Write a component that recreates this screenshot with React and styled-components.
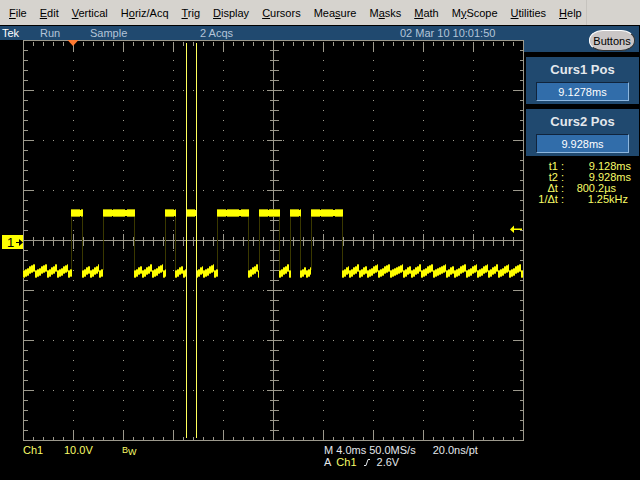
import React from "react"
import styled, { createGlobalStyle } from "styled-components"

const colors = {
  black: "#000",
  menu: "#d6d3ce",
  navy: "#20496f",
  field: "#316daa",
  grid: "#9c998c",
  trace: "#ffff00",
  dim: "#a8a600",
  edge: "#3a3800",
  cursor: "#ffff5a",
  yellow: "#f8fc68",
  light: "#e4e8ec",
  status: "#b4c4d8",
  orange: "#ff7a31",
}

const GlobalStyle = createGlobalStyle`
  * {
    box-sizing: border-box;
  }
  body {
    margin: 0;
    background: ${colors.black};
    color: ${colors.light};
    font: 11px/12px "Liberation Sans", Arial, sans-serif;
  }
  button, input {
    font: inherit;
  }
`

const Page = styled.div`
  display: flex;
  flex-direction: column;
  min-height: 100vh;
`

const MenuBar = styled.nav`
  display: flex;
  height: 26px;
  background: ${colors.menu};
  border-bottom: 1px solid ${colors.black};
`

const MenuList = styled.div`
  display: flex;
  align-items: center;
  gap: 13px;
  padding: 0 4px 0 9px;
  border-right: 1px solid #c6c3be;
`

const MenuItem = styled.button`
  padding: 0;
  border: 0;
  background: none;
  color: ${colors.black};
  line-height: 14px;
  white-space: pre;
`

const Body = styled.div`
  display: flex;
  flex: 1;
`

const Main = styled.main`
  flex: 1;
  min-width: 0;
`

const Status = styled.header`
  display: grid;
  grid-template-columns: 38px 50px 110px 200px 1fr;
  height: 14px;
  padding-left: 2px;
  background: ${colors.navy};
  color: ${colors.status};
  line-height: 14px;
  white-space: nowrap;
`

const Brand = styled.strong`
  color: #fff;
  font-weight: normal;
`

const Display = styled.svg`
  display: block;
  width: 100%;
`

const ChannelMark = styled.text`
  fill: ${colors.black};
  font-size: 13px;
`

const Readouts = styled.footer`
  display: grid;
  grid-template-columns: 301fr 200fr;
  padding: 3px 0 0 23px;
`

const Channel = styled.div`
  display: grid;
  grid-template-columns: 41px 58px 1fr;
  color: ${colors.yellow};
`

const Bandwidth = styled.span`
  font-size: 9px;
  sub {
    font-size: 9px;
    line-height: 1px;
    vertical-align: -2px;
  }
`

const Timebase = styled.div`
  display: flex;
  gap: 3px;
  white-space: nowrap;
`

const Resolution = styled.span`
  margin-left: 14px;
`

const Trigger = styled.div`
  display: flex;
  gap: 5px;
  em {
    color: ${colors.yellow};
    font-style: normal;
  }
`

const Side = styled.aside`
  display: flex;
  flex-direction: column;
  gap: 5px;
  width: 116px;
`

const SideTop = styled.div`
  display: flex;
  justify-content: flex-end;
  height: 26px;
  padding: 4px 4px 0 0;
  margin-right: 1px;
  background: ${colors.navy};
`

const ButtonsKey = styled.button`
  width: 46px;
  height: 21px;
  padding: 0;
  border: 1px solid #fff;
  border-right-color: #333;
  border-bottom-color: #333;
  border-radius: 14px / 10px;
  background: #cac6c6;
  color: ${colors.black};
`

const Panel = styled.label`
  display: flex;
  flex-direction: column;
  gap: 5px;
  height: 47px;
  margin: 0 1px 0 2px;
  padding: 6px 10px 0;
  background: ${colors.navy};
  font-size: 13px;
  font-weight: bold;
  line-height: 14px;
  text-align: center;
`

const PanelInput = styled.input`
  width: 100%;
  height: 19px;
  padding: 0;
  border: 1px solid #10243c;
  border-right-color: #8cb6de;
  border-bottom-color: #8cb6de;
  border-radius: 0;
  background: ${colors.field};
  color: #fff;
  font-size: 11px;
  font-weight: normal;
  text-align: center;
`

const Measurements = styled.table`
  margin: 0 9px 0 10px;
  border-collapse: collapse;
  color: ${colors.yellow};
  line-height: 11px;
  th {
    width: 30px;
    padding: 0;
    font-weight: normal;
    text-align: right;
    white-space: nowrap;
  }
`

const Value = styled.td`
  padding: 0 ${props => props.$inset || 0}px 0 0;
  text-align: right;
`

// text, index of the underlined letter
const menus = [
  ["File", 0],
  ["Edit", 0],
  ["Vertical", 0],
  ["Horiz/Acq", 1],
  ["Trig", 0],
  ["Display", 0],
  ["Cursors", 0],
  ["Measure", 3],
  ["Masks", 1],
  ["Math", 0],
  ["MyScope", 1],
  ["Utilities", 0],
  ["Help", 0],
]

const cursors = [
  { name: "Curs1 Pos", value: "9.1278ms" },
  { name: "Curs2 Pos", value: "9.928ms" },
]

const measurements = [
  { name: "t1 :", value: "9.128ms" },
  { name: "t2 :", value: "9.928ms" },
  { name: "Δt :", value: "800.2µs", inset: 15 },
  { name: "1/Δt :", value: "1.25kHz", inset: 3 },
]

// the graticule is 10 x 8 divisions of 50 units, with its corner at (23, 0)
const LEFT = 23
const RIGHT = 523
const HEIGHT = 400
const steps = n => Array.from({ length: n - 1 }, (_, i) => (i + 1) * 10)

const ticks = () => {
  let d = ""
  steps(50).forEach(i => {
    const x = LEFT + i
    const major = i % 50 === 0
    const edge = major ? 10 : 4
    const mid = major ? 7 : 4
    d += `M${x} 1v${edge}M${x} ${HEIGHT}v${-edge}M${x} ${200 - mid}v${mid * 2 + 1}`
  })
  steps(40).forEach(y => {
    const major = y % 50 === 0
    const edge = major ? 10 : 4
    const mid = major ? 7 : 4
    d += `M${LEFT} ${y}h${edge}M${RIGHT} ${y}h${-edge}M${273 - mid} ${y}h${mid * 2 + 1}`
  })
  return d
}

const dots = () => {
  let d = ""
  steps(50).forEach(i => {
    steps(40).forEach(y => {
      if (i % 50 === 0 || y % 50 === 0) d += `M${LEFT + i} ${y}h1v1h-1z`
    })
  })
  return d
}

const highs = [
  [71, 83],
  [103, 135],
  [165, 176],
  [186, 197],
  [217, 249],
  [259, 280],
  [290, 301],
  [311, 343],
]

// the places where the low level ripple falls back, span by span
const lows = [
  [23, 35, 47, 57, 68, 72],
  [82, 90, 99, 103],
  [134, 142, 152, 163, 166],
  [175, 183, 187],
  [196, 203, 214, 218],
  [248, 258, 259],
  [279, 289, 291],
  [300, 306, 311],
  [342, 349, 359, 367, 378, 390, 403, 411, 421, 433, 446, 454, 466, 477, 488, 498, 509, 521, 523],
]

const tooth = (from, to) => {
  const n = Math.ceil((to - from) / 2)
  let d = ""
  for (let i = 0; i < n; i++) {
    const x = from + i * 2
    const y = 234 - Math.round((i * 7) / Math.max(n, 5))
    d += `M${x} ${y}h${Math.min(2, to - x)}`
  }
  return d
}

const lowPath = lows
  .map(span => span.slice(1).map((x, i) => tooth(span[i], x)).join(""))
  .join("")

const Graticule = () => (
  <g shapeRendering="crispEdges">
    <path d={dots()} fill={colors.grid} />
    <g stroke={colors.grid} fill="none" transform="translate(0.5 0.5)">
      <path d={`M${LEFT} 0H${RIGHT}V${HEIGHT}H${LEFT}Z`} />
      <path d={`M${LEFT} 200H${RIGHT}M273 0V${HEIGHT}`} />
      <path d={ticks()} />
    </g>
  </g>
)

const Trace = () => (
  <g shapeRendering="crispEdges">
    <path
      d={highs.map(([a, b]) => `M${a + 0.5} 174V230M${b - 0.5} 174V230`).join("")}
      stroke={colors.edge}
    />
    <path
      d={highs.map(([a, b]) => `M${a} 173H${b}`).join("")}
      stroke={colors.dim}
      strokeWidth="8"
      strokeDasharray="9 1 12 2"
    />
    <path
      d={highs.map(([a, b]) => `M${a} 173H${b}`).join("")}
      stroke={colors.trace}
      strokeWidth="6"
    />
    <path d={lowPath} stroke={colors.dim} strokeWidth="8" />
    <path d={lowPath} stroke={colors.trace} strokeWidth="6" />
  </g>
)

const Scope = () => (
  <Display viewBox="0 0 524 401" role="img" aria-label="Channel 1 waveform">
    <Graticule />
    <path d="M67.500 0h11l-5.500 6z" fill={colors.orange} />
    <Trace />
    <path
      d="M186.500 3V398M196.500 3V398"
      stroke={colors.cursor}
      shapeRendering="crispEdges"
    />
    <path d="M2 195h21v14H2z" fill={colors.trace} />
    <ChannelMark x="7" y="207">1</ChannelMark>
    <path d="M16 202h3v-3l4 3.500-4 3.500v-3h-3z" fill={colors.black} />
    <path d="M510 189.500l4-4v3h8v1.500h-8v3z" fill={colors.trace} />
  </Display>
)

const App = () => (
  <Page>
    <GlobalStyle />
    <MenuBar>
      <MenuList>
        {menus.map(([text, at]) => (
          <MenuItem key={text}>
            {text.slice(0, at)}
            <u>{text[at]}</u>
            {text.slice(at + 1)}
          </MenuItem>
        ))}
      </MenuList>
    </MenuBar>
    <Body>
      <Main>
        <Status>
          <Brand>Tek</Brand>
          <span>Run</span>
          <span>Sample</span>
          <span>2 Acqs</span>
          <time>02 Mar 10 10:01:50</time>
        </Status>
        <Scope />
        <Readouts>
          <Channel>
            <span>Ch1</span>
            <span>10.0V</span>
            <Bandwidth>
              B<sub>W</sub>
            </Bandwidth>
          </Channel>
          <div>
            <Timebase>
              <span>M 4.0ms</span>
              <span>50.0MS/s</span>
              <Resolution>20.0ns/pt</Resolution>
            </Timebase>
            <Trigger>
              <span>A</span>
              <em>Ch1</em>
              <svg width="10" height="12" viewBox="0 0 10 12" aria-label="rising edge">
                <path d="M2 9.500H4L6 3.500H8" fill="none" stroke="currentColor" />
              </svg>
              <span>2.6V</span>
            </Trigger>
          </div>
        </Readouts>
      </Main>
      <Side>
        <SideTop>
          <ButtonsKey>Buttons</ButtonsKey>
        </SideTop>
        {cursors.map(c => (
          <Panel key={c.name}>
            {c.name}
            <PanelInput defaultValue={c.value} />
          </Panel>
        ))}
        <Measurements>
          <tbody>
            {measurements.map(m => (
              <tr key={m.name}>
                <th scope="row">{m.name}</th>
                <Value $inset={m.inset}>{m.value}</Value>
              </tr>
            ))}
          </tbody>
        </Measurements>
      </Side>
    </Body>
  </Page>
)

export default App
